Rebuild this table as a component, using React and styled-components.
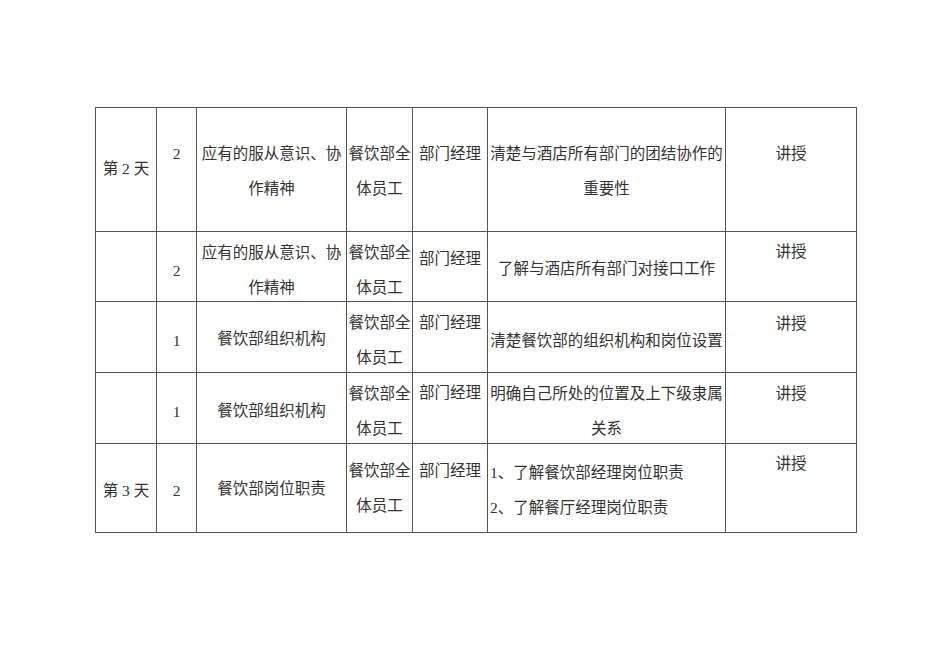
import React from "react";
import styled, { createGlobalStyle } from "styled-components";

const Global = createGlobalStyle`
  html, body { margin: 0; padding: 0; background: #fff; }
  body { font-family: "Liberation Serif", "Noto Sans CJK SC", serif; color: #333; }
`;

const Page = styled.div`
  width: 950px;
  height: 672px;
  box-sizing: border-box;
  padding: 107px 0 0 95px;
  background: #fff;
`;

const Table = styled.div`
  display: grid;
  grid-template-columns: 61px 40px 150px 66px 75px 238px 131px;
  grid-template-rows: 124px 70px 71px 71px 89px;
  width: max-content;
  border-top: 1px solid #555;
  border-left: 1px solid #555;
`;

const Cell = styled.div`
  box-sizing: border-box;
  border-right: 1px solid #555;
  border-bottom: 1px solid #555;
  padding-top: ${(p) => p.$pt || 0}px;
  padding-left: ${(p) => (p.$left ? 2 : 0)}px;
  display: flex;
  flex-direction: column;
  align-items: ${(p) => (p.$left ? "flex-start" : "center")};
  font-size: 15.5px;
  line-height: 35px;
  overflow: visible;
`;

const Line = styled.span`
  display: block;
  white-space: nowrap;
`;

const rows = [
  [
    { t: ["第 2 天"], pt: 42.5 },
    { t: ["2"], pt: 27.5 },
    { t: ["应有的服从意识、协", "作精神"], pt: 27.5 },
    { t: ["餐饮部全", "体员工"], pt: 27.5 },
    { t: ["部门经理"], pt: 27.5 },
    { t: ["清楚与酒店所有部门的团结协作的", "重要性"], pt: 27.5 },
    { t: ["讲授"], pt: 27.5 },
  ],
  [
    { t: [], pt: 0 },
    { t: ["2"], pt: 20.5 },
    { t: ["应有的服从意识、协", "作精神"], pt: 2.5 },
    { t: ["餐饮部全", "体员工"], pt: 2.5 },
    { t: ["部门经理"], pt: 8.5 },
    { t: ["了解与酒店所有部门对接口工作"], pt: 18.5 },
    { t: ["讲授"], pt: 1.5 },
  ],
  [
    { t: [], pt: 0 },
    { t: ["1"], pt: 20.5 },
    { t: ["餐饮部组织机构"], pt: 18.5 },
    { t: ["餐饮部全", "体员工"], pt: 2.5 },
    { t: ["部门经理"], pt: 2.5 },
    { t: ["清楚餐饮部的组织机构和岗位设置"], pt: 20.5 },
    { t: ["讲授"], pt: 3.5 },
  ],
  [
    { t: [], pt: 0 },
    { t: ["1"], pt: 21 },
    { t: ["餐饮部组织机构"], pt: 19.5 },
    { t: ["餐饮部全", "体员工"], pt: 2.5 },
    { t: ["部门经理"], pt: 1.5 },
    { t: ["明确自己所处的位置及上下级隶属", "关系"], pt: 2.5 },
    { t: ["讲授"], pt: 2.5 },
  ],
  [
    { t: ["第 3 天"], pt: 28.5 },
    { t: ["2"], pt: 28.5 },
    { t: ["餐饮部岗位职责"], pt: 26.5 },
    { t: ["餐饮部全", "体员工"], pt: 8.5 },
    { t: ["部门经理"], pt: 8.5 },
    { t: ["1、了解餐饮部经理岗位职责", "2、了解餐厅经理岗位职责"], pt: 10.5, left: true },
    { t: ["讲授"], pt: 1.5 },
  ],
];

export default function App() {
  return (
    <>
      <Global />
      <Page>
        <Table>
          {rows.map((row, ri) =>
            row.map((c, ci) => (
              <Cell key={`${ri}-${ci}`} $pt={c.pt} $left={c.left}>
                {c.t.map((l, li) => (
                  <Line key={li}>{l}</Line>
                ))}
              </Cell>
            ))
          )}
        </Table>
      </Page>
    </>
  );
}
